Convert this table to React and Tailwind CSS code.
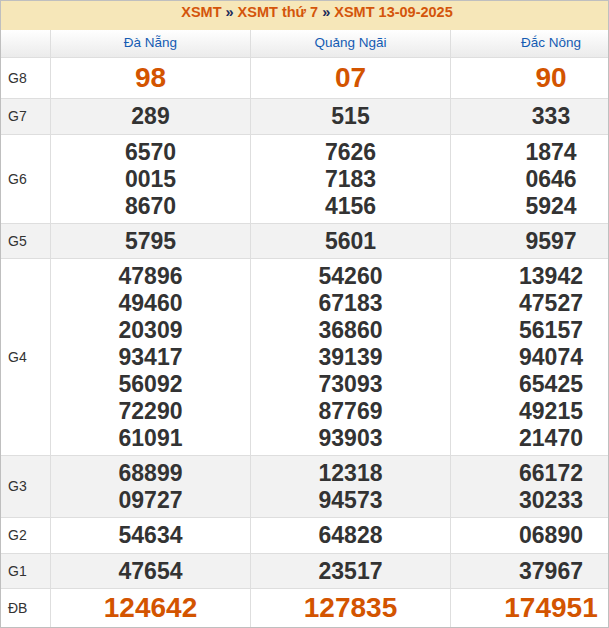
import React from "react";

const rows = [
  { label: "G8", h: "h-[40px]", bg: "bg-white", big: true, vals: [["98"], ["07"], ["90"]] },
  { label: "G7", h: "h-[35px]", bg: "bg-[#f2f2f2]", vals: [["289"], ["515"], ["333"]] },
  { label: "G6", h: "h-[88px]", bg: "bg-white", vals: [["6570", "0015", "8670"], ["7626", "7183", "4156"], ["1874", "0646", "5924"]] },
  { label: "G5", h: "h-[34px]", bg: "bg-[#f2f2f2]", vals: [["5795"], ["5601"], ["9597"]] },
  {
    label: "G4",
    h: "h-[196px]",
    bg: "bg-white",
    vals: [
      ["47896", "49460", "20309", "93417", "56092", "72290", "61091"],
      ["54260", "67183", "36860", "39139", "73093", "87769", "93903"],
      ["13942", "47527", "56157", "94074", "65425", "49215", "21470"],
    ],
  },
  { label: "G3", h: "h-[61px]", bg: "bg-[#f2f2f2]", vals: [["68899", "09727"], ["12318", "94573"], ["66172", "30233"]] },
  { label: "G2", h: "h-[35px]", bg: "bg-white", vals: [["54634"], ["64828"], ["06890"]] },
  { label: "G1", h: "h-[34px]", bg: "bg-[#f2f2f2]", vals: [["47654"], ["23517"], ["37967"]] },
  { label: "ĐB", h: "h-[38px]", bg: "bg-white", big: true, vals: [["124642"], ["127835"], ["174951"]] },
];

function Cell({ lines, big, last }) {
  return (
    <div
      className={`w-[200px] shrink-0 flex flex-col items-center justify-center ${last ? "" : "border-r border-[#dedede]"}`}
    >
      {lines.map((l, i) => (
        <div
          key={i}
          className={
            big
              ? "text-[28px] leading-[32px] font-bold text-[#d35400]"
              : "text-[23px] leading-[27px] font-bold text-[#333333]"
          }
        >
          {l}
        </div>
      ))}
    </div>
  );
}

export default function App() {
  return (
    <div
      className="w-[609px] h-[628px] border border-[#bfbfbf] overflow-hidden bg-white"
      style={{ fontFamily: '"Liberation Sans", Arial, sans-serif' }}
    >
      <div className="h-[29px] bg-[#f6e7b9] pl-[25px] pt-[3px] flex justify-center text-[14.5px] leading-[17px] font-bold whitespace-nowrap">
        <span className="text-[#d4550b]">XSMT</span>
        <span className="text-[#1c2b5a] mx-[4px]">»</span>
        <span className="text-[#d4550b]">XSMT thứ 7</span>
        <span className="text-[#1c2b5a] mx-[4px]">»</span>
        <span className="text-[#d4550b]">XSMT 13-09-2025</span>
      </div>
      <div className="w-[650px]">
        <div className="flex h-[28px] border-b border-[#dedede] bg-gradient-to-b from-white to-[#ebebeb] text-[13.5px] text-[#145cb3]">
          <div className="w-[50px] shrink-0 border-r border-[#dedede]"></div>
          <div className="w-[200px] shrink-0 border-r border-[#dedede] flex items-center justify-center">Đà Nẵng</div>
          <div className="w-[200px] shrink-0 border-r border-[#dedede] flex items-center justify-center">Quảng Ngãi</div>
          <div className="w-[200px] shrink-0 flex items-center justify-center">Đắc Nông</div>
        </div>
        {rows.map((r) => (
          <div key={r.label} className={`flex box-content ${r.h} border-b border-[#dedede] ${r.bg}`}>
            <div className="w-[50px] shrink-0 border-r border-[#dedede] flex items-center pl-[7px] text-[14px] text-[#333333]">
              {r.label}
            </div>
            <Cell lines={r.vals[0]} big={r.big} />
            <Cell lines={r.vals[1]} big={r.big} />
            <Cell lines={r.vals[2]} big={r.big} last />
          </div>
        ))}
      </div>
    </div>
  );
}
